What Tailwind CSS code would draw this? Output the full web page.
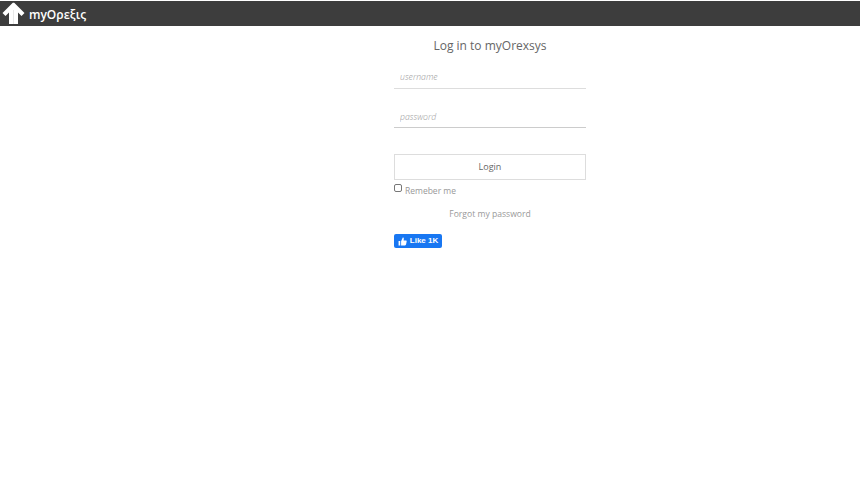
<!DOCTYPE html>
<html lang="en">
<head>
    <meta charset="UTF-8">
    <title>myOrexsys</title>
    <script src="https://cdn.jsdelivr.net/npm/@tailwindcss/browser@4"></script>
</head>
<body class="bg-white font-['Open_Sans',sans-serif] h-[484px] overflow-hidden">
    <!-- Top bar -->
    <header class="h-[25px] mt-px bg-[#3d3d3d] flex items-center pl-0.5">
        <svg width="23" height="22" viewBox="0 0 23 22" class="mb-0.5">
            <path d="M7 22V10.500L3.500 14 0.500 11 10.500 1C11 .5 12 .5 12.500 1L22.500 11 19.500 14 16 10.500V22Z" fill="#fff"/>
            <path d="M11.500 8V22" stroke="#d8d8d8" stroke-width=".6"/>
        </svg>
        <span class="ml-[4px] mt-[3px] text-white text-[12px] font-semibold leading-none">myΟρεξις</span>
    </header>

    <!-- Login form -->
    <main class="w-[192px] ml-[394px] flex flex-col">
        <h2 class="mt-[11px] text-center text-[#666] text-[12px] leading-[17px]">Log in to myOrexsys</h2>
        <input type="text" placeholder="username" class="mt-[10px] h-[25px] w-full px-[6px] pt-[2px] border-b border-[#ddd] text-[8.7px] italic font-light outline-none placeholder:text-[#999]">
        <input type="password" placeholder="password" class="mt-[14px] h-[25px] w-full px-[6px] pt-[3px] border-b border-[#ccc] text-[8.7px] italic font-light outline-none placeholder:text-[#999]">
        <button class="mt-[26px] h-[26px] w-full border border-[#ddd] bg-white text-[#666] text-[9px]">Login</button>
        <label class="mt-[3px] flex items-center h-[14px] text-[#999] text-[8.5px]">
            <input type="checkbox" class="w-[8px] h-[8px] mb-[5px] appearance-none rounded-[2px] border border-[#777] bg-white">
            <span class="ml-[3px] mt-[3px]">Remeber me</span>
        </label>
        <a href="#" class="mt-[10px] text-center text-[#999] text-[8.6px] leading-[14px]">Forgot my password</a>
        <button class="mt-[13px] w-[48px] h-[14px] rounded-[2px] bg-[#1877f2] text-white text-[8px] font-bold font-['Liberation_Sans',sans-serif] flex items-center justify-center gap-[3px]">
            <svg width="9" height="9" viewBox="0 0 16 16"><path d="M1 7h3v8H1z M5.500 7.500 8.500 1c1.400 0 2 1 1.800 2.200L10 6h4c1 0 1.600 .8 1.400 1.800l-1.100 5.700c-.2.900-.9 1.500-1.800 1.500H5.500z" fill="#fff"/></svg>
            <span>Like 1K</span>
        </button>
    </main>
</body>
</html>
